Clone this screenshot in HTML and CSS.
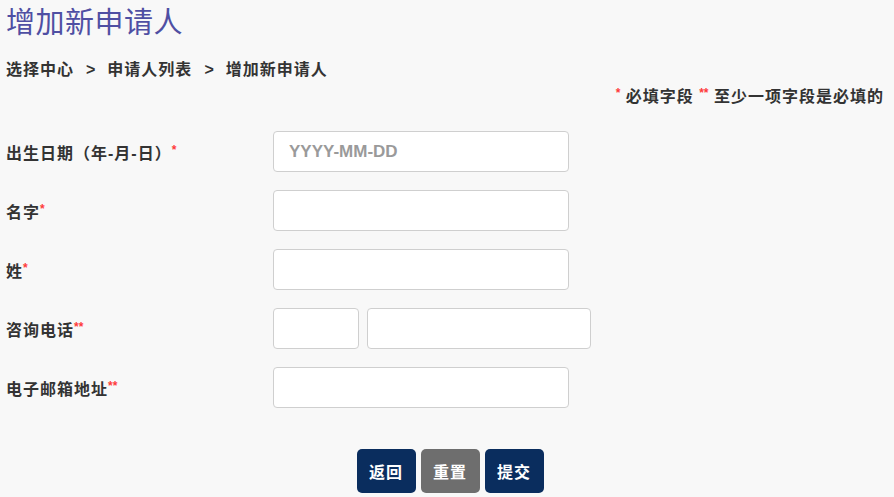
FILE: index.html
```html
<!DOCTYPE html>
<html lang="zh">
<head>
<meta charset="utf-8">
<title>增加新申请人</title>
<link rel="stylesheet" href="styles.css">
</head>
<body>
<div class="page">
  <h1 class="title">增加新申请人</h1>
  <nav class="crumbs">
    <span>选择中心</span><span class="sep">&gt;</span><span>申请人列表</span><span class="sep">&gt;</span><span>增加新申请人</span>
  </nav>
  <p class="legend"><span class="star">*</span> 必填字段 <span class="star">**</span> 至少一项字段是必填的</p>
  <form class="form">
    <div class="row">
      <label class="label">出生日期（年-月-日）<span class="star">*</span></label>
      <input class="input" type="text" placeholder="YYYY-MM-DD">
    </div>
    <div class="row">
      <label class="label">名字<span class="star">*</span></label>
      <input class="input" type="text">
    </div>
    <div class="row">
      <label class="label">姓<span class="star">*</span></label>
      <input class="input" type="text">
    </div>
    <div class="row">
      <label class="label">咨询电话<span class="star">**</span></label>
      <div class="phone">
        <input class="input code" type="text">
        <input class="input number" type="text">
      </div>
    </div>
    <div class="row">
      <label class="label">电子邮箱地址<span class="star">**</span></label>
      <input class="input" type="text">
    </div>
    <div class="actions">
      <button type="button" class="btn primary">返回</button>
      <button type="button" class="btn grey">重置</button>
      <button type="button" class="btn primary">提交</button>
    </div>
  </form>
</div>
</body>
</html>
```
FILE: styles.css
```css
html, body {
  margin: 0;
  padding: 0;
  background: #f8f8f8;
}
body {
  font-family: "Liberation Sans", "Noto Sans CJK SC", sans-serif;
  color: #333;
}
.page {
  width: 894px;
  height: 497px;
  box-sizing: border-box;
  padding: 6px 10px 0 6px;
  overflow: hidden;
}
.title {
  margin: 0;
  font-size: 29px;
  font-weight: normal;
  line-height: 34px;
  color: #4f4fa3;
  letter-spacing: 0.5px;
}
.crumbs {
  margin-top: 20px;
  font-size: 16px;
  font-weight: bold;
  line-height: 20px;
  letter-spacing: 1px;
  color: #333;
  display: flex;
}
.crumbs .sep {
  margin: 0 11px 0 12px;
}
.legend {
  margin: 2px 0 0;
  text-align: right;
  font-size: 16px;
  font-weight: bold;
  line-height: 22px;
  letter-spacing: 1px;
  color: #333;
}
.star {
  color: #ff3b3b;
  font-size: 12px;
  vertical-align: 5px;
  letter-spacing: 0;
}
.form {
  margin-top: 23px;
}
.row {
  display: flex;
  align-items: center;
  height: 41px;
  margin-bottom: 18px;
}
.label {
  width: 267px;
  flex: none;
  font-size: 16px;
  font-weight: bold;
  letter-spacing: 1px;
  color: #333;
}
.input {
  box-sizing: border-box;
  width: 296px;
  height: 41px;
  border: 1px solid #cfcfcf;
  border-radius: 4px;
  background: #fff;
  padding: 0 15px;
  font-family: "Liberation Sans", sans-serif;
  font-size: 17px;
  color: #333;
  outline: none;
}
.input::placeholder {
  color: #9a9a9a;
  font-weight: bold;
}
.phone {
  display: flex;
  gap: 8px;
}
.input.code {
  width: 86px;
}
.input.number {
  width: 224px;
}
.actions {
  display: flex;
  justify-content: center;
  gap: 5px;
  margin-top: 41px;
  margin-left: 10px;
}
.btn {
  width: 59px;
  height: 44px;
  border: none;
  border-radius: 5px;
  color: #fff;
  font-family: "Liberation Sans", "Noto Sans CJK SC", sans-serif;
  font-size: 16px;
  font-weight: bold;
  letter-spacing: 1px;
  padding: 0;
  cursor: pointer;
}
.btn.primary {
  background: #0a2d5e;
}
.btn.grey {
  background: #6e6e6e;
}
```
